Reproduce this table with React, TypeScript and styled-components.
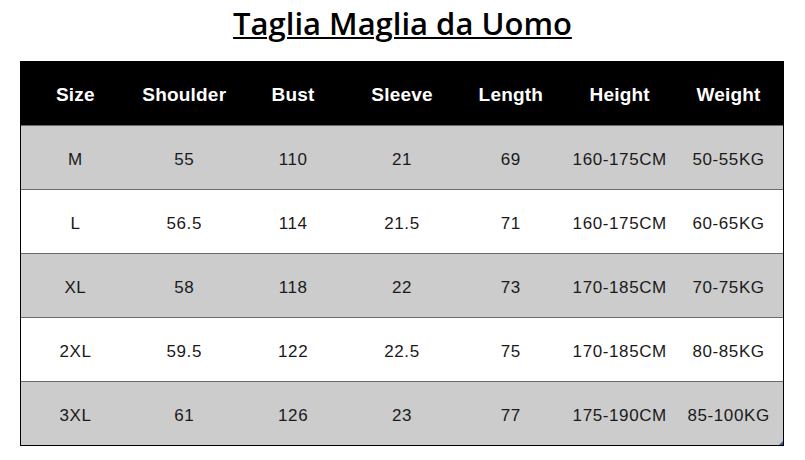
import React from "react";
import styled, { createGlobalStyle } from "styled-components";

const Global = createGlobalStyle`
  html, body { margin: 0; padding: 0; background: #ffffff; }
  body { font-family: "Liberation Sans", Arial, sans-serif; }
`;

const Page = styled.div`
  width: 805px;
  height: 460px;
  background: #ffffff;
  overflow: hidden;
`;

const TitleBar = styled.div`
  height: 61px;
  display: flex;
  justify-content: center;
  align-items: flex-start;
`;

const Title = styled.h1`
  margin: 3px 0 0 0;
  font-family: "Open Sans", "Liberation Sans", sans-serif;
  font-size: 31px;
  font-weight: 600;
  color: #000;
  text-decoration: underline;
  text-decoration-thickness: 2px;
  text-underline-offset: 2px;
  line-height: 40px;
`;

const Table = styled.div`
  position: relative;
  margin-left: 20px;
  width: 764px;
  box-sizing: border-box;
  border-left: 1px solid #000;
  border-right: 1px solid #000;
  border-bottom: 1px solid #000;
`;

const Row = styled.div<{ $variant: "head" | "gray" | "white" }>`
  display: grid;
  grid-template-columns: repeat(7, 1fr);
  height: 64px;
  box-sizing: border-box;
  background: ${(p) =>
    p.$variant === "head" ? "#000000" : p.$variant === "gray" ? "#cccccc" : "#ffffff"};
  border-top: ${(p) => (p.$variant === "head" ? "none" : "1px solid #6b6b6b")};
`;

const Cell = styled.div<{ $head?: boolean }>`
  display: flex;
  align-items: center;
  justify-content: center;
  padding-top: ${(p) => (p.$head ? "4px" : "5px")};
  font-size: ${(p) => (p.$head ? "19px" : "17px")};
  font-weight: ${(p) => (p.$head ? 700 : 400)};
  letter-spacing: ${(p) => (p.$head ? "0.2px" : "0.6px")};
  color: ${(p) => (p.$head ? "#ffffff" : "#1a1a1a")};
  white-space: nowrap;
`;

const CornerMark = styled.div`
  position: absolute;
  right: 0;
  bottom: 0;
  width: 0;
  height: 0;
  border-left: 4px solid transparent;
  border-bottom: 4px solid #3a55b0;
`;

const headers = ["Size", "Shoulder", "Bust", "Sleeve", "Length", "Height", "Weight"];
const rows: string[][] = [
  ["M", "55", "110", "21", "69", "160-175CM", "50-55KG"],
  ["L", "56.5", "114", "21.5", "71", "160-175CM", "60-65KG"],
  ["XL", "58", "118", "22", "73", "170-185CM", "70-75KG"],
  ["2XL", "59.5", "122", "22.5", "75", "170-185CM", "80-85KG"],
  ["3XL", "61", "126", "23", "77", "175-190CM", "85-100KG"],
];

export default function App() {
  return (
    <Page>
      <Global />
      <TitleBar>
        <Title>Taglia Maglia da Uomo</Title>
      </TitleBar>
      <Table>
        <Row $variant="head">
          {headers.map((h) => (
            <Cell key={h} $head>
              {h}
            </Cell>
          ))}
        </Row>
        {rows.map((r, i) => (
          <Row key={r[0]} $variant={i % 2 === 0 ? "gray" : "white"}>
            {r.map((c, j) => (
              <Cell key={j}>{c}</Cell>
            ))}
          </Row>
        ))}
        <CornerMark />
      </Table>
    </Page>
  );
}
